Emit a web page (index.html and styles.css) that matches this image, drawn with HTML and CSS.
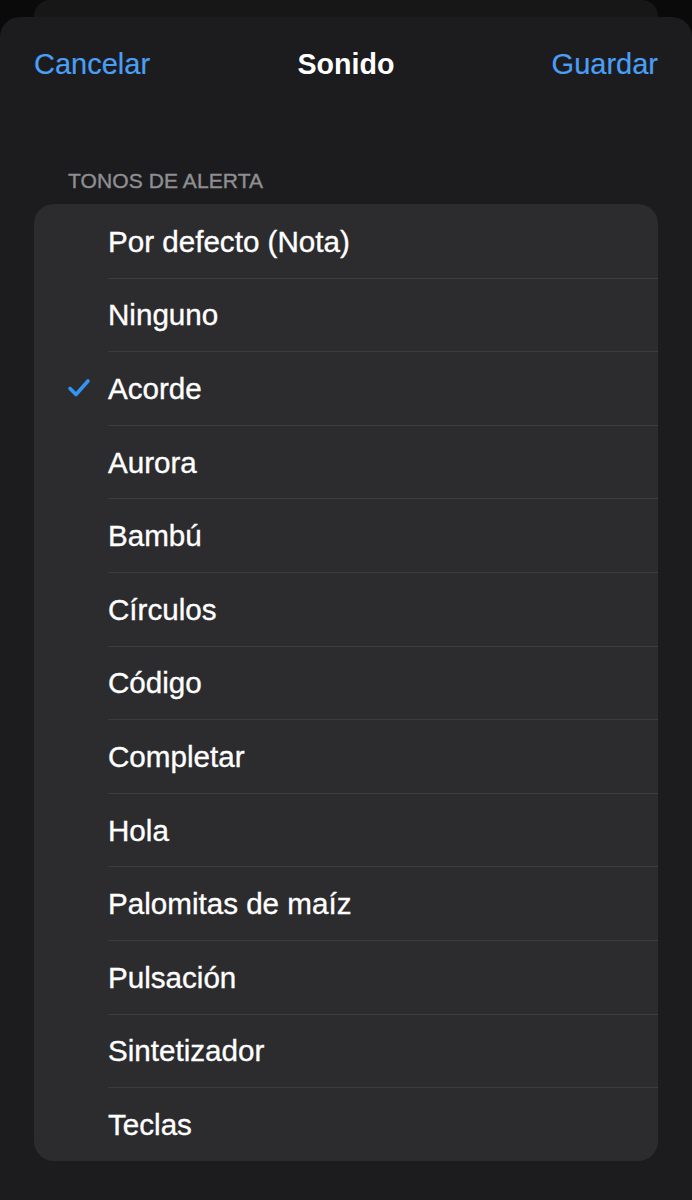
FILE: index.html
```html
<!DOCTYPE html>
<html lang="es">
<head>
<meta charset="utf-8">
<title>Sonido</title>
<link rel="stylesheet" href="styles.css">
</head>
<body>
<div class="behind"></div>
<div class="sheet">
  <header class="nav">
    <span class="nav-btn left">Cancelar</span>
    <span class="nav-title">Sonido</span>
    <span class="nav-btn right">Guardar</span>
  </header>
  <div class="section-title">TONOS DE ALERTA</div>
  <ul class="list">
    <li class="row"><span class="check"></span><span class="label">Por defecto (Nota)</span></li>
    <li class="row"><span class="check"></span><span class="label">Ninguno</span></li>
    <li class="row selected"><span class="check"><svg viewBox="0 0 24 20" width="24" height="20"><path d="M3 10.5 L9 16.5 L21 3" fill="none" stroke="currentColor" stroke-width="3.6" stroke-linecap="round" stroke-linejoin="round"/></svg></span><span class="label">Acorde</span></li>
    <li class="row"><span class="check"></span><span class="label">Aurora</span></li>
    <li class="row"><span class="check"></span><span class="label">Bambú</span></li>
    <li class="row"><span class="check"></span><span class="label">Círculos</span></li>
    <li class="row"><span class="check"></span><span class="label">Código</span></li>
    <li class="row"><span class="check"></span><span class="label">Completar</span></li>
    <li class="row"><span class="check"></span><span class="label">Hola</span></li>
    <li class="row"><span class="check"></span><span class="label">Palomitas de maíz</span></li>
    <li class="row"><span class="check"></span><span class="label">Pulsación</span></li>
    <li class="row"><span class="check"></span><span class="label">Sintetizador</span></li>
    <li class="row"><span class="check"></span><span class="label">Teclas</span></li>
  </ul>
</div>
</body>
</html>
```

FILE: styles.css
```css
html, body {
  margin: 0;
  padding: 0;
}
body {
  background: #0a0a0a;
  font-family: "Liberation Sans", Arial, sans-serif;
  color: #ffffff;
  width: 692px;
  height: 1200px;
  overflow: hidden;
}
.behind {
  height: 17px;
  margin: 0 34px;
  background: #171718;
  border-radius: 16px 16px 0 0;
}
.sheet {
  background: #1c1c1e;
  border-radius: 20px 20px 0 0;
  height: 1183px;
  padding: 0 34px;
  box-sizing: border-box;
}
.nav {
  height: 94px;
  display: grid;
  grid-template-columns: 1fr auto 1fr;
  align-items: center;
  font-size: 29px;
}
.nav-btn {
  color: #4a9ff5;
  -webkit-text-stroke: 0.2px #4a9ff5;
}
.nav-btn.right {
  text-align: right;
}
.nav-title {
  font-weight: bold;
  font-size: 28.6px;
}
.section-title {
  margin: 57px 0 11px 34px;
  font-size: 21px;
  line-height: 25px;
  letter-spacing: 0.1px;
  color: #8e8e93;
  -webkit-text-stroke: 0.4px #8e8e93;
}
.list {
  list-style: none;
  margin: 0;
  padding: 0;
  background: #2c2c2e;
  border-radius: 20px;
  overflow: hidden;
}
.row {
  height: 73.6px;
  display: flex;
  align-items: center;
  position: relative;
}
.row + .row::before {
  content: "";
  position: absolute;
  top: 0;
  left: 74px;
  right: 0;
  height: 1px;
  background: #3d3d40;
}
.check {
  width: 74px;
  box-sizing: border-box;
  padding-left: 33px;
  display: flex;
  align-items: center;
  color: #3494f4;
}
.check svg {
  display: block;
}
.label {
  font-size: 29.6px;
  padding-top: 2px;
  color: #ffffff;
  -webkit-text-stroke: 0.35px #ffffff;
}
```
